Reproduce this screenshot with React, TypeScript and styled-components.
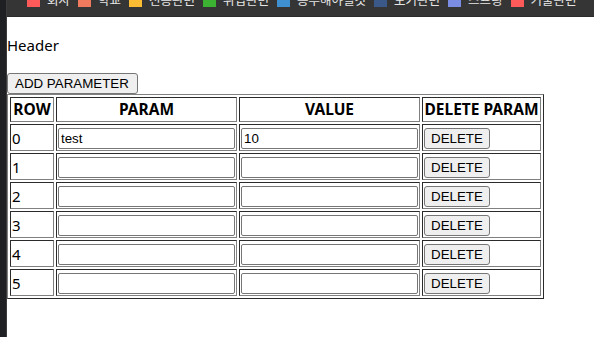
import React, { useState } from "react";
import styled, { createGlobalStyle } from "styled-components";

const Global = createGlobalStyle`
  html, body { margin: 0; padding: 0; background: #ffffff; }
  body { width: 594px; height: 337px; overflow: hidden; }
`;

const Shell = styled.div`
  display: flex;
  height: 337px;
`;

const SideStrip = styled.div`
  flex: none;
  width: 6px;
  background: #1f2023;
  border-right: 1px solid #3b3c3e;
`;

const Main = styled.div`
  flex: 1;
  min-width: 0;
  display: flex;
  flex-direction: column;
`;

const BookmarkBar = styled.div`
  flex: none;
  height: 16px;
  background: #353535;
  border-bottom: 1px solid #2b2b2b;
  overflow: hidden;
  padding-left: 20px;
  display: flex;
`;

const BookmarkTrack = styled.div`
  display: flex;
  align-items: center;
  gap: 8px;
  height: 14px;
  margin-top: -7px;
  white-space: nowrap;
`;

const Bookmark = styled.div`
  flex: none;
  display: flex;
  align-items: center;
  gap: 7px;
`;

const Favicon = styled.span<{ $color: string }>`
  flex: none;
  width: 13px;
  height: 13px;
  background: ${(p) => p.$color};
`;

const BookmarkLabel = styled.span`
  font-family: "Noto Sans CJK KR", "Noto Sans", sans-serif;
  font-size: 12.5px;
  line-height: 14px;
  color: #e6e6e6;
`;

const Page = styled.div`
  font-family: "Noto Sans", "Open Sans", sans-serif;
  font-size: 15px;
  color: #000;
`;

const HeaderText = styled.div`
  margin: 18px 0;
  line-height: 20px;
`;

const Toolbar = styled.div`
  display: flex;
`;

const NativeButton = styled.button`
  font-family: "Liberation Sans", Arial, sans-serif;
  font-size: 13.33px;
  line-height: 15px;
  color: #000;
  background: #efefef;
  border: 1px solid #767676;
  border-radius: 3px;
  padding: 2px 6px;
  margin: 0;
  height: 21px;
  display: block;
  cursor: pointer;
`;

const AddButton = styled(NativeButton)`
  padding: 2px 8px 2px 7px;
`;

const ParamTable = styled.table`
  border-collapse: separate;
  border-spacing: 2px;
  border: 1px solid;
  border-color: #808080 #2b2b2b #2b2b2b #808080;
`;

const HeadCell = styled.th<{ $w: number }>`
  width: ${(p) => p.$w}px;
  padding: 1px;
  border: 1px solid;
  border-color: #2b2b2b #808080 #808080 #2b2b2b;
  font-weight: 700;
  font-size: 15.5px;
  line-height: 21px;
  white-space: nowrap;
  text-align: center;
`;

const Cell = styled.td`
  padding: 1px;
  border: 1px solid;
  border-color: #2b2b2b #808080 #808080 #2b2b2b;
  vertical-align: top;
`;

const NumCell = styled(Cell)`
  padding-top: 3px;
  line-height: 20px;
`;

const TextInput = styled.input`
  display: block;
  box-sizing: border-box;
  width: 100%;
  height: 21px;
  margin: 2px 0 0;
  padding: 1px 2px;
  border: 1px solid #767676;
  border-radius: 2px;
  font-family: "Liberation Sans", Arial, sans-serif;
  font-size: 13.33px;
  color: #000;
  background: #fff;
  outline: none;
`;

const CellButton = styled(NativeButton)`
  margin-top: 2px;
`;

const bookmarks = [
  { label: "회사", color: "#ff5a5a" },
  { label: "학교", color: "#f07a5e" },
  { label: "전공관련", color: "#fbbb32" },
  { label: "취업관련", color: "#3cb232" },
  { label: "공부해야될것", color: "#3f90d0" },
  { label: "도커관련", color: "#3a5888" },
  { label: "스프링", color: "#7a8de2" },
  { label: "기술관련", color: "#ff5a5a" },
];

type Row = { id: number; param: string; value: string };

export default function App() {
  const [rows, setRows] = useState<Row[]>([
    { id: 0, param: "test", value: "10" },
    { id: 1, param: "", value: "" },
    { id: 2, param: "", value: "" },
    { id: 3, param: "", value: "" },
    { id: 4, param: "", value: "" },
    { id: 5, param: "", value: "" },
  ]);

  const addRow = () =>
    setRows((r) => [...r, { id: Date.now(), param: "", value: "" }]);
  const removeRow = (id: number) => setRows((r) => r.filter((x) => x.id !== id));
  const update = (id: number, key: "param" | "value", v: string) =>
    setRows((r) => r.map((x) => (x.id === id ? { ...x, [key]: v } : x)));

  return (
    <>
      <Global />
      <Shell>
        <SideStrip />
        <Main>
          <BookmarkBar>
            <BookmarkTrack>
              {bookmarks.map((b, i) => (
                <Bookmark key={i}>
                  <Favicon $color={b.color} />
                  <BookmarkLabel>{b.label}</BookmarkLabel>
                </Bookmark>
              ))}
            </BookmarkTrack>
          </BookmarkBar>
          <Page>
            <HeaderText>Header</HeaderText>
            <Toolbar>
              <AddButton onClick={addRow}>ADD PARAMETER</AddButton>
            </Toolbar>
            <ParamTable>
              <thead>
                <tr>
                  <HeadCell $w={40}>ROW</HeadCell>
                  <HeadCell $w={177}>PARAM</HeadCell>
                  <HeadCell $w={177}>VALUE</HeadCell>
                  <HeadCell $w={115}>DELETE PARAM</HeadCell>
                </tr>
              </thead>
              <tbody>
                {rows.map((row, i) => (
                  <tr key={row.id}>
                    <NumCell>{i}</NumCell>
                    <Cell>
                      <TextInput
                        value={row.param}
                        onChange={(e) => update(row.id, "param", e.target.value)}
                      />
                    </Cell>
                    <Cell>
                      <TextInput
                        value={row.value}
                        onChange={(e) => update(row.id, "value", e.target.value)}
                      />
                    </Cell>
                    <Cell>
                      <CellButton onClick={() => removeRow(row.id)}>DELETE</CellButton>
                    </Cell>
                  </tr>
                ))}
              </tbody>
            </ParamTable>
          </Page>
        </Main>
      </Shell>
    </>
  );
}
